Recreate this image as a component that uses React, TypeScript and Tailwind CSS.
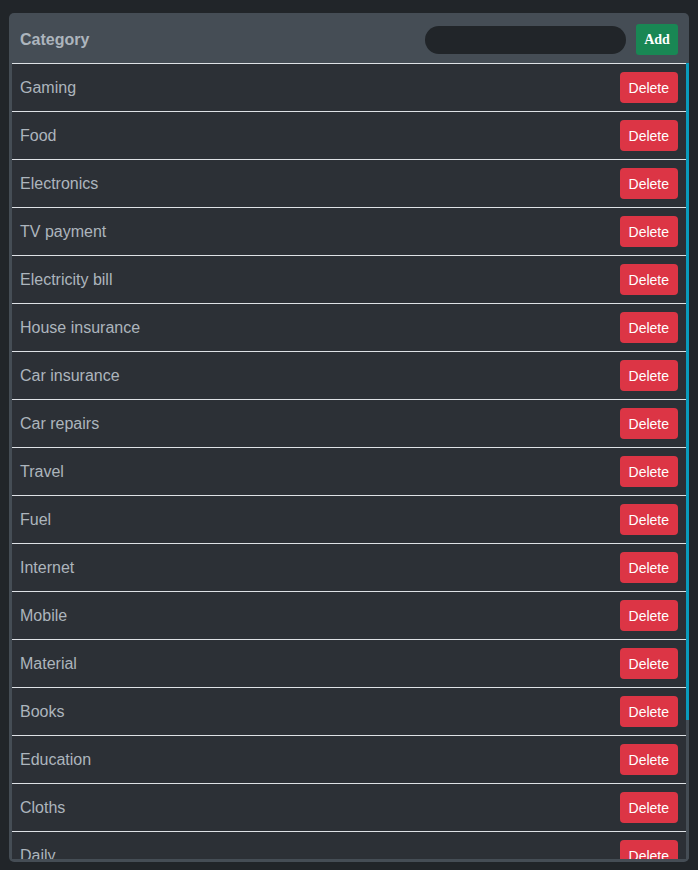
const categories = [
  "Gaming",
  "Food",
  "Electronics",
  "TV payment",
  "Electricity bill",
  "House insurance",
  "Car insurance",
  "Car repairs",
  "Travel",
  "Fuel",
  "Internet",
  "Mobile",
  "Material",
  "Books",
  "Education",
  "Cloths",
  "Daily",
  "Health",
  "Entertainment",
  "Other",
];

export default function App() {
  return (
    <div className="min-h-[870px] bg-[#212529] px-[9px] pt-[13px] font-['Liberation_Sans',Arial,sans-serif]">
      <div className="flex h-[849px] flex-col overflow-hidden rounded-[5px] bg-[#454d55] py-[3px] pl-[3px]">
        {/* Header */}
        <div className="flex h-[47px] shrink-0 items-center justify-between pl-2 pr-[11px]">
          <span className="text-base font-bold text-[#adb5bd]">Category</span>
          <div className="flex items-center gap-[10px]">
            <input
              type="text"
              className="h-[28px] w-[201px] rounded-full bg-[#212529] px-3 text-sm text-[#adb5bd] outline-none"
            />
            <button className="h-[31px] w-[42px] rounded-[3px] bg-[#198754] font-['Liberation_Serif',serif] text-sm font-bold text-white">
              Add
            </button>
          </div>
        </div>

        {/* List + scrollbar */}
        <div className="flex min-h-0 flex-1">
          <div className="min-w-0 flex-1 overflow-hidden bg-[#2c3036]">
            {categories.map((name) => (
              <div
                key={name}
                className="flex h-[48px] items-center justify-between border-t border-[#dee2e6] px-2"
              >
                <span className="text-base text-[#adb5bd]">{name}</span>
                <button className="h-[31px] rounded-[4px] bg-[#dc3545] px-[9px] text-sm text-white">
                  Delete
                </button>
              </div>
            ))}
          </div>
          <div className="w-[3px] shrink-0 bg-[#454d55]">
            <div className="h-[657px] bg-[#0a9cbd]" />
          </div>
        </div>
      </div>
    </div>
  );
}
